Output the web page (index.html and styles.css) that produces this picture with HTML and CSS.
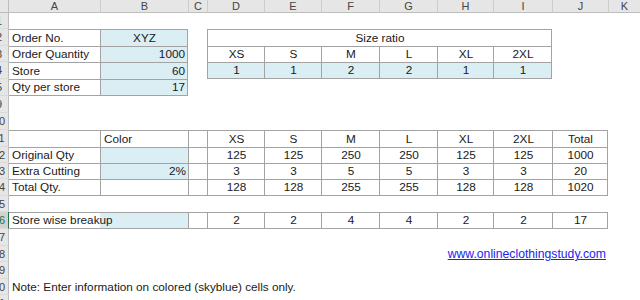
FILE: index.html
```html
<!DOCTYPE html>
<html>
<head>
<meta charset="utf-8">
<title>Size ratio sheet</title>
<link rel="stylesheet" href="styles.css">
</head>
<body>
<table class="sheet">
  <colgroup>
    <col class="c-rh"><col class="c-a"><col class="c-b"><col class="c-c"><col class="c-d"><col class="c-e"><col class="c-f"><col class="c-g"><col class="c-h"><col class="c-i"><col class="c-j"><col class="c-k">
  </colgroup>
  <thead>
    <tr class="hdr">
      <th class="corner"></th><th class="first">A</th><th>B</th><th>C</th><th>D</th><th>E</th><th>F</th><th>G</th><th>H</th><th>I</th><th>J</th><th>K</th>
    </tr>
  </thead>
  <tbody>
    <tr class="h16"><th class="rh"><span>1</span></th><td colspan="11"></td></tr>
    <tr class="h17">
      <th class="rh"><span>2</span></th>
      <td class="b">Order No.</td>
      <td class="b br sky ctr">XYZ</td>
      <td></td>
      <td class="b br ctr" colspan="6">Size ratio</td>
      <td></td><td></td>
    </tr>
    <tr class="h16">
      <th class="rh"><span>3</span></th>
      <td class="b">Order Quantity</td>
      <td class="b br sky num">1000</td>
      <td></td>
      <td class="b ctr">XS</td><td class="b ctr">S</td><td class="b ctr">M</td><td class="b ctr">L</td><td class="b ctr">XL</td><td class="b br ctr">2XL</td>
      <td></td><td></td>
    </tr>
    <tr class="h17">
      <th class="rh"><span>4</span></th>
      <td class="b">Store</td>
      <td class="b br sky num">60</td>
      <td></td>
      <td class="b bb sky ctr">1</td><td class="b bb sky ctr">1</td><td class="b bb sky ctr">2</td><td class="b bb sky ctr">2</td><td class="b bb sky ctr">1</td><td class="b bb br sky ctr">1</td>
      <td></td><td></td>
    </tr>
    <tr class="h16">
      <th class="rh"><span>5</span></th>
      <td class="b bb">Qty per store</td>
      <td class="b bb br sky num">17</td>
      <td colspan="9"></td>
    </tr>
    <tr class="h17"><th class="rh"><span>9</span></th><td colspan="11"></td></tr>
    <tr class="h17"><th class="rh"><span>10</span></th><td colspan="11"></td></tr>
    <tr class="h17">
      <th class="rh"><span>11</span></th>
      <td class="b"></td>
      <td class="b">Color</td>
      <td class="b"></td>
      <td class="b ctr">XS</td><td class="b ctr">S</td><td class="b ctr">M</td><td class="b ctr">L</td><td class="b ctr">XL</td><td class="b ctr">2XL</td><td class="b br ctr">Total</td>
      <td></td>
    </tr>
    <tr class="h16">
      <th class="rh"><span>12</span></th>
      <td class="b">Original Qty</td>
      <td class="b sky"></td>
      <td class="b"></td>
      <td class="b ctr">125</td><td class="b ctr">125</td><td class="b ctr">250</td><td class="b ctr">250</td><td class="b ctr">125</td><td class="b ctr">125</td><td class="b br ctr">1000</td>
      <td></td>
    </tr>
    <tr class="h16">
      <th class="rh"><span>13</span></th>
      <td class="b">Extra Cutting</td>
      <td class="b sky num">2%</td>
      <td class="b"></td>
      <td class="b ctr">3</td><td class="b ctr">3</td><td class="b ctr">5</td><td class="b ctr">5</td><td class="b ctr">3</td><td class="b ctr">3</td><td class="b br ctr">20</td>
      <td></td>
    </tr>
    <tr class="h17">
      <th class="rh"><span>14</span></th>
      <td class="b bb">Total Qty.</td>
      <td class="b bb"></td>
      <td class="b bb"></td>
      <td class="b bb ctr">128</td><td class="b bb ctr">128</td><td class="b bb ctr">255</td><td class="b bb ctr">255</td><td class="b bb ctr">128</td><td class="b bb ctr">128</td><td class="b bb br ctr">1020</td>
      <td></td>
    </tr>
    <tr class="h16"><th class="rh"><span>15</span></th><td colspan="11"></td></tr>
    <tr class="h16">
      <th class="rh active"><span>16</span></th>
      <td class="bt bb">Store wise breakup</td>
      <td class="bt bb sky"></td>
      <td class="b bb"></td>
      <td class="b bb ctr">2</td><td class="b bb ctr">2</td><td class="b bb ctr">4</td><td class="b bb ctr">4</td><td class="b bb ctr">2</td><td class="b bb ctr">2</td><td class="b bb br ctr">17</td>
      <td></td>
    </tr>
    <tr class="h17"><th class="rh"><span>17</span></th><td colspan="11"></td></tr>
    <tr class="h16">
      <th class="rh"><span>18</span></th>
      <td colspan="10" class="num"><a class="link" href="#">www.onlineclothingstudy.com</a></td>
      <td></td>
    </tr>
    <tr class="h17"><th class="rh"><span>19</span></th><td colspan="11"></td></tr>
    <tr class="h16">
      <th class="rh"><span>20</span></th>
      <td colspan="10">Note: Enter information on colored (skyblue) cells only.</td>
      <td></td>
    </tr>
    <tr class="h16"><th class="rh"><span>21</span></th><td colspan="11"></td></tr>
  </tbody>
</table>
</body>
</html>
```

FILE: styles.css
```css
html, body {
  margin: 0;
  padding: 0;
  background: #ffffff;
  overflow: hidden;
}

body {
  width: 640px;
  height: 300px;
}

.sheet {
  border-collapse: separate;
  border-spacing: 0;
  table-layout: fixed;
  width: 640px;
  font-family: "Liberation Sans", Arial, sans-serif;
  font-size: 11.75px;
  color: #1a1a1a;
}

.c-rh { width: 9px; }
.c-a { width: 91px; }
.c-b { width: 88px; }
.c-c { width: 19px; }
.c-d { width: 57px; }
.c-e { width: 57px; }
.c-f { width: 58px; }
.c-g { width: 58px; }
.c-h { width: 56px; }
.c-i { width: 59px; }
.c-j { width: 56px; }
.c-k { width: 32px; }

.sheet td,
.sheet th {
  box-sizing: border-box;
  padding: 0 2px 1px 3px;
  white-space: nowrap;
  vertical-align: bottom;
  line-height: 14px;
  font-weight: normal;
  text-align: left;
}

.h16 { height: 16px; }
.h17 { height: 17px; }

/* column header strip */
.hdr { height: 13px; }
.hdr th {
  background: #e6e6e6;
  color: #444444;
  font-size: 11px;
  line-height: 12px;
  text-align: center;
  vertical-align: middle;
  padding: 0;
  border-left: 1px solid #cdcdcd;
  border-bottom: 1px solid #bdbdbd;
}
.hdr th.corner {
  border-left: none;
  border-right: 1px solid #bdbdbd;
}
.hdr th.first { border-left: none; }

/* row header strip */
.sheet th.rh {
  background: #e6e6e6;
  color: #444444;
  font-size: 11px;
  padding: 0;
  overflow: hidden;
  vertical-align: middle;
  border-right: 1px solid #bdbdbd;
  border-bottom: 1px solid #dadada;
}
.rh span {
  display: block;
  width: 16px;
  margin-left: -9px;
  text-align: center;
}
.sheet th.rh.active {
  background: #d2d2d2;
  color: #217346;
  border-right-color: #217346;
}

/* cell borders */
.b {
  border-left: 1px solid #a3a3a3;
  border-top: 1px solid #a3a3a3;
}
.bt { border-top: 1px solid #a3a3a3; }
.bb { border-bottom: 1px solid #a3a3a3; }
.br { border-right: 1px solid #a3a3a3; }
.rh + .b { border-left: none; }

.sky { background: #daeef3; }
.sheet .ctr { text-align: center; }
.sheet .num { text-align: right; }

.link {
  color: #2323ee;
  font-size: 12.2px;
  text-decoration: underline;
}
```
